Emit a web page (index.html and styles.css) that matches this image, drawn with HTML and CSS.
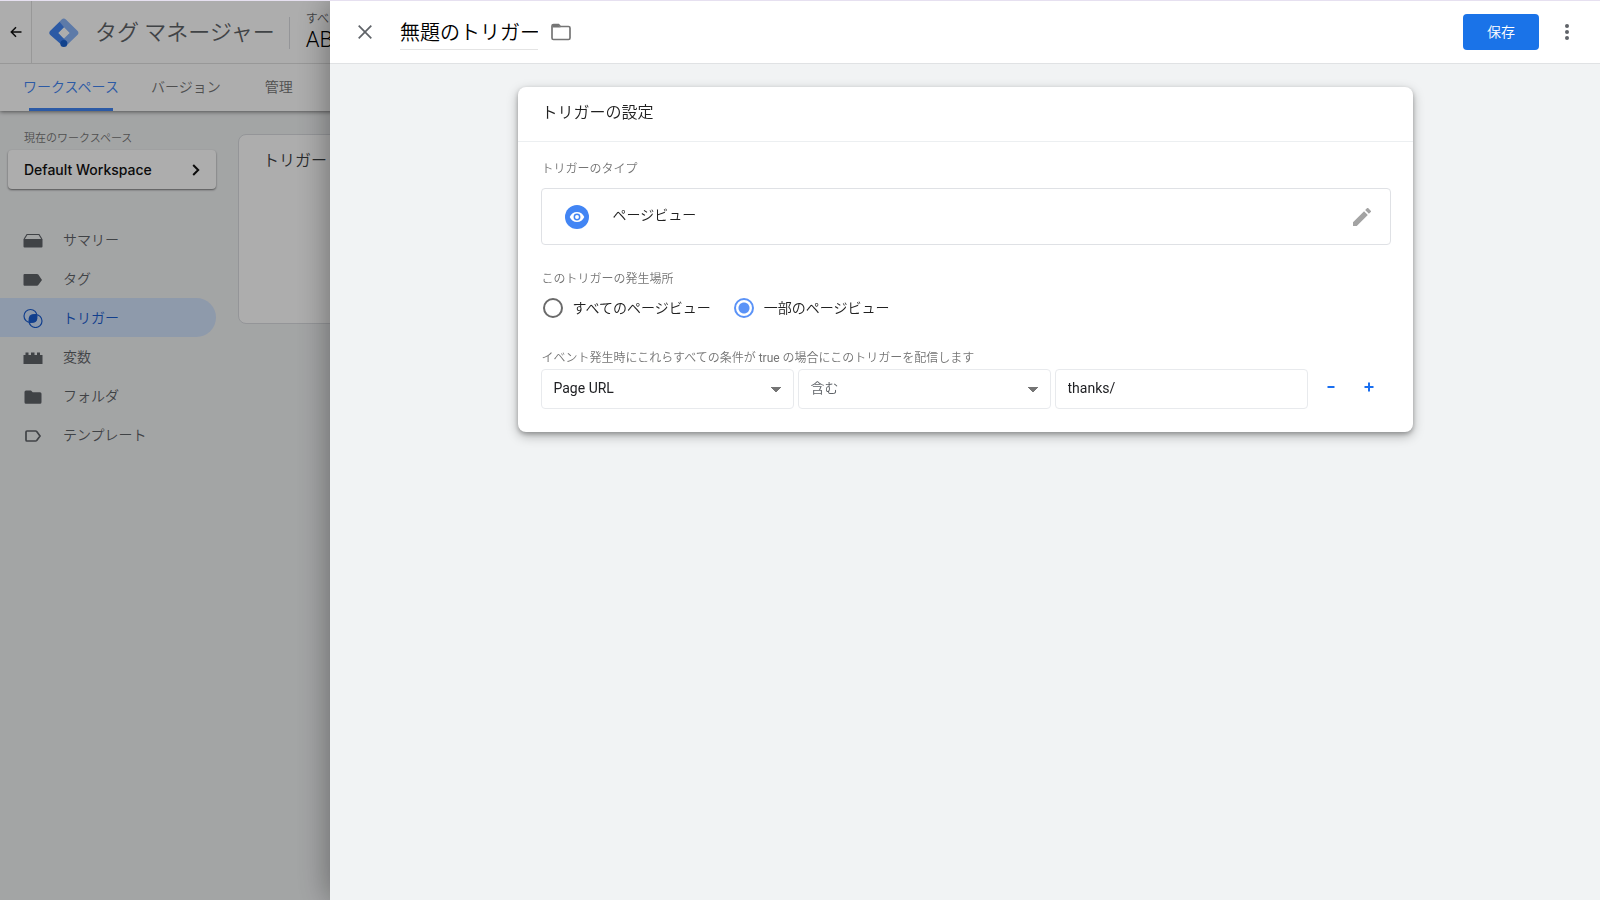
FILE: index.html
```html
<!DOCTYPE html>
<html lang="ja">
<head>
<meta charset="utf-8">
<title>タグ マネージャー</title>
<link rel="stylesheet" href="styles.css">
</head>
<body>
<div class="app">
  <header class="topbar">
    <button class="back" aria-label="戻る">
      <svg width="12" height="12" viewBox="0 0 12 12" fill="none" stroke="#111" stroke-width="1.5"><path d="M11.500 6H1.500M6 1.300L1.300 6L6 10.700"/></svg>
    </button>
    <div class="brand">
      <svg width="30" height="30" viewBox="0 0 30 30">
        <path d="M12.600 1.600a3 3 0 0 1 4.300 0L28.400 12.800a3 3 0 0 1 0 4.200L18 27L14 20L20.500 15L10 4.200z" fill="#8ab4f8"/>
        <path d="M1.300 12.800L10.500 3.700L15.200 9.300L9.500 15L18.500 24.500L14.500 28.500L1.300 17a3 3 0 0 1 0-4.200z" fill="#4285f4"/>
        <path d="M15 9.500L20.500 15L15 20.500L9.500 15z" fill="#fff"/>
        <circle cx="14.800" cy="25.400" r="3.500" fill="#1a62cf"/>
      </svg>
      <span class="brand-name">タグ マネージャー</span>
    </div>
    <div class="account">
      <span class="account-path">すべ</span>
      <span class="account-name">AB</span>
    </div>
  </header>
  <nav class="tabs">
    <a class="tab tab-active" href="#">ワークスペース</a>
    <a class="tab" href="#">バージョン</a>
    <a class="tab" href="#">管理</a>
  </nav>
  <div class="workspace">
    <aside class="sidebar">
      <p class="side-label">現在のワークスペース</p>
      <button class="workspace-picker">
        <span>Default Workspace</span>
        <svg width="8" height="12" viewBox="0 0 8 12" fill="none" stroke="#111" stroke-width="2"><path d="M1.200 1L6.200 6L1.200 11"/></svg>
      </button>
      <nav class="menu">
        <a class="item" href="#">
          <svg width="20" height="20" viewBox="0 0 20 20"><path d="M.500 9h19v7.500a1 1 0 0 1-1 1h-17a1 1 0 0 1-1-1z" fill="#5f6368"/><path d="M1.200 9L4 4.500h12L18.800 9" fill="none" stroke="#5f6368" stroke-width="1.200"/></svg>
          サマリー</a>
        <a class="item" href="#">
          <svg width="20" height="20" viewBox="0 0 20 20" fill="#5f6368"><path d="M1.500 5H14q.8 0 1.300.6L19 11l-3.700 5.100q-.5.700-1.300.7H1.500a1 1 0 0 1-1-1V6a1 1 0 0 1 1-1z"/></svg>
          タグ</a>
        <a class="item item-active" href="#">
          <svg width="20" height="20" viewBox="0 0 20 20"><g fill="none" stroke="#1a5dd0" stroke-width="1.200"><circle cx="7.500" cy="8" r="6.500"/><circle cx="12.500" cy="13" r="6.500"/></g><path d="M6.200 14.300A6.500 6.500 0 0 1 13.800 6.700A6.500 6.500 0 0 1 6.200 14.300z" fill="#1a5dd0"/><circle cx="10" cy="10.500" r="4.300" fill="#1a5dd0"/></svg>
          トリガー</a>
        <a class="item" href="#">
          <svg width="20" height="20" viewBox="0 0 20 20" fill="#5f6368"><path d="M.500 8h2V5.500h3V8h2.500V5.500h3.500V8H14V5.500h3V8h2.500v9H.500z"/></svg>
          変数</a>
        <a class="item" href="#">
          <svg width="20" height="20" viewBox="0 0 20 20" fill="#5f6368"><path d="M3 4.500h5l1.700 1.700H17a1.500 1.500 0 0 1 1.500 1.500v8.500a1.500 1.500 0 0 1-1.500 1.500H3a1.500 1.500 0 0 1-1.500-1.500V6A1.500 1.500 0 0 1 3 4.500z"/></svg>
          フォルダ</a>
        <a class="item" href="#">
          <svg width="20" height="20" viewBox="0 0 20 20" fill="none" stroke="#5f6368" stroke-width="1.700"><path d="M4 6h8.500q.8 0 1.200.5L17 11l-3.300 4.500q-.4.500-1.200.5H4a1 1 0 0 1-1-1V7a1 1 0 0 1 1-1z"/></svg>
          テンプレート</a>
      </nav>
    </aside>
    <main class="content">
      <section class="list-card"><h2 class="list-title">トリガー</h2></section>
    </main>
  </div>
</div>
<div class="scrim"></div>
<section class="sheet" role="dialog" aria-label="無題のトリガー">
  <header class="sheet-head">
    <button class="icon-button" aria-label="閉じる">
      <svg width="14" height="14" viewBox="0 0 14 14" fill="none" stroke="#5f6368" stroke-width="1.700"><path d="M.700.700L13.300 13.300M13.300.700L.700 13.300"/></svg>
    </button>
    <input class="sheet-title" aria-label="トリガー名" value="無題のトリガー">
    <button class="icon-button" aria-label="フォルダ">
      <svg width="20" height="18" viewBox="0 0 20 18"><path d="M2.500 1.500h5l2 2h8A1.500 1.500 0 0 1 19 5v10a1.500 1.500 0 0 1-1.500 1.500h-15A1.500 1.500 0 0 1 1 15V3a1.500 1.500 0 0 1 1.500-1.500z" fill="none" stroke="#757575" stroke-width="1.700"/><path d="M1.500 2h6l2 2.500h-8z" fill="#757575"/></svg>
    </button>
    <button class="save">保存</button>
    <button class="icon-button" aria-label="その他">
      <svg width="4" height="16" viewBox="0 0 4 16" fill="#5f6368"><circle cx="2" cy="2" r="2"/><circle cx="2" cy="8" r="2"/><circle cx="2" cy="14" r="2"/></svg>
    </button>
  </header>
  <div class="card">
    <h2 class="card-title">トリガーの設定</h2>
    <div class="card-body">
      <h3 class="label">トリガーのタイプ</h3>
      <button class="type">
        <svg width="24" height="24" viewBox="0 0 24 24"><circle cx="12" cy="12" r="12" fill="#4285f4"/><path d="M4.700 12C6 8.900 8.800 7 12 7s6 1.900 7.300 5c-1.300 3.100-4.100 5-7.300 5s-6-1.900-7.300-5z" fill="#fff"/><circle cx="12" cy="12" r="2.700" fill="#fff" stroke="#4285f4" stroke-width="1.500"/></svg>
        <span class="type-name">ページビュー</span>
        <svg width="18" height="18" viewBox="3 3 18 18" fill="#a3a3a3"><path d="M3 17.250V21h3.750L17.810 9.940l-3.750-3.750L3 17.250zM20.710 7.040a1 1 0 0 0 0-1.410l-2.340-2.340a1 1 0 0 0-1.410 0l-1.830 1.830 3.750 3.750 1.830-1.830z"/></svg>
      </button>
      <fieldset class="where">
        <legend class="label">このトリガーの発生場所</legend>
        <div class="radios">
          <label class="radio"><input type="radio" name="where">すべてのページビュー</label>
          <label class="radio"><input type="radio" name="where" checked>一部のページビュー</label>
        </div>
      </fieldset>
      <h3 class="label">イベント発生時にこれらすべての条件が <span class="latin">true</span> の場合にこのトリガーを配信します</h3>
      <div class="condition">
        <select class="field select" aria-label="変数"><option>Page URL</option></select>
        <select class="field select select-muted" aria-label="演算子"><option>含む</option></select>
        <input class="field" type="text" aria-label="値" value="thanks/">
        <div class="row-actions">
          <button class="row-button" aria-label="条件を削除"><svg width="10" height="10" viewBox="0 0 10 10"><path d="M1.500 4h7v2h-7z" fill="#1a6ff0"/></svg></button>
          <button class="row-button" aria-label="条件を追加"><svg width="10" height="10" viewBox="0 0 10 10"><path d="M.500 4H4V.500h2V4h3.500v2H6v3.500H4V6H.500z" fill="#1a6ff0"/></svg></button>
        </div>
      </div>
    </div>
  </div>
</section>
</body>
</html>
```
FILE: styles.css
```css
* { box-sizing: border-box; }
body {
  margin: 0;
  min-height: 100vh;
  overflow: hidden;
  background: #f1f3f4;
  color: #3c4043;
  font: 350 14px/20px Roboto, "Noto Sans CJK JP DemiLight", "Noto Sans CJK JP", sans-serif;
}
button, input, select { font: inherit; color: inherit; }
button { border: 0; padding: 0; background: none; cursor: pointer; }
a { color: inherit; text-decoration: none; }
h2, h3, p { margin: 0; font-weight: inherit; }
svg { display: block; flex: none; }

.app { border-top: 1px solid #e6e0f0; }
.topbar {
  position: relative;
  z-index: 1;
  display: flex;
  align-items: stretch;
  height: 63px;
  background: #fff;
  border-bottom: 1px solid #e0e0e0;
}
.back {
  display: flex;
  align-items: center;
  justify-content: center;
  width: 32px;
  border-right: 1px solid #e0e0e0;
}
.brand { display: flex; align-items: center; gap: 16px; padding: 1px 0 0 17px; }
.brand-name { color: #5f6368; font-size: 22px; line-height: 32px; white-space: nowrap; }
.account {
  display: flex;
  flex-direction: column;
  align-self: center;
  margin: 2px 0 0 14px;
  padding-left: 17px;
  background: linear-gradient(#dadce0, #dadce0) left center / 1px 32px no-repeat;
}
.account-path { color: #5f6368; font-size: 12px; line-height: 14px; }
.account-name { color: #000; font-size: 22px; line-height: 28px; }
.tabs {
  position: relative;
  display: flex;
  gap: 30px;
  height: 47px;
  padding: 0 22px;
  background: #fff;
  box-shadow: 0 1px 4px rgba(0, 0, 0, .5);
}
.tab { display: flex; align-items: center; color: #757575; padding: 0 1px 2px; }
.tab + .tab + .tab { margin-left: 12px; }
.tab-active {
  color: #4285f4;
  background: linear-gradient(#4285f4, #4285f4) center bottom / 84px 3px no-repeat;
}

.workspace { display: flex; }
.sidebar { width: 216px; padding-top: 19px; }
.side-label { padding-left: 24px; color: #757575; font-size: 11px; line-height: 18px; }
.workspace-picker {
  display: flex;
  align-items: center;
  justify-content: space-between;
  width: 208px;
  height: 39px;
  margin: 2px 0 31px 8px;
  padding: 0 16px;
  background: #fff;
  border-radius: 4px;
  box-shadow: 0 1px 2px rgba(0, 0, 0, .5);
  color: #111;
  font: 500 14px/20px Inter, sans-serif;
}
.item { display: flex; align-items: center; gap: 20px; height: 39px; padding-left: 23px; color: #5f6368; }
.item-active { color: #1a5dd0; background: #d2e3fc; border-radius: 0 20px 20px 0; }
.content { flex: 1; padding: 23px 22px 0; }
.list-card { height: 190px; padding: 14px 24px; background: #fff; border: 1px solid #dadce0; border-radius: 8px; }
.list-title { font-size: 16px; line-height: 24px; }

.scrim { position: fixed; inset: 1px 0 0; z-index: 2; background: rgba(0, 0, 0, .32); }
.sheet {
  position: fixed;
  inset: 1px 0 0 330px;
  z-index: 3;
  background: #f1f3f4;
  box-shadow: 0 0 32px rgba(0, 0, 0, .4);
  clip-path: inset(0 0 0 -60px);
}
.sheet-head {
  display: flex;
  align-items: center;
  height: 63px;
  padding: 0 21px 0 23px;
  background: #fff;
  border-bottom: 1px solid #e0e2e4;
}
.icon-button { display: flex; align-items: center; justify-content: center; width: 24px; height: 32px; }
.sheet-title {
  width: 138px;
  height: 35px;
  margin: 0 11px 0 23px;
  padding: 0;
  border: 0;
  border-bottom: 1px solid #e4e4e4;
  background: none;
  color: #000;
  font-size: 20px;
}
.save {
  width: 76px;
  height: 36px;
  margin: 0 16px 0 auto;
  background: #1a73e8;
  border-radius: 4px;
  color: #fff;
}
.card {
  max-width: 895px;
  margin: 23px auto 0;
  background: #fff;
  border-radius: 8px;
  box-shadow: 0 4px 12px rgba(0, 0, 0, .28), 0 2px 4px rgba(0, 0, 0, .24);
}
.card-title { padding: 14px 24px 16px; border-bottom: 1px solid #eceff1; color: #212121; font-size: 16px; line-height: 24px; }
.card-body { padding: 18px 22px 23px 23px; }
.label { padding: 0 1px; color: #757575; font-size: 12px; line-height: 18px; }
.latin { font-weight: 400; }
.type {
  display: flex;
  align-items: center;
  gap: 24px;
  width: 100%;
  height: 57px;
  margin: 10px 0 25px;
  padding: 0 19px 0 23px;
  border: 1px solid #dfe1e5;
  border-radius: 4px;
  text-align: left;
}
.type-name { flex: 1; padding-bottom: 4px; color: #212121; }
.where { margin: 0 0 31px; padding: 0; border: 0; }
.radios { display: flex; gap: 23px; padding: 10px 2px 0; }
.radio { display: flex; align-items: center; gap: 10px; color: #212121; }
.radio input {
  appearance: none;
  width: 20px;
  height: 20px;
  margin: 0;
  border: 2px solid #6a6a6a;
  border-radius: 50%;
}
.radio input:checked {
  border-color: #5b93f7;
  background: radial-gradient(circle, #5b93f7 5px, #fff 6px);
}
.condition { display: flex; gap: 4px; margin-top: 2px; }
.field {
  flex: 1;
  min-width: 0;
  height: 40px;
  padding: 0 12px 2px;
  border: 1px solid #e8eaed;
  border-radius: 4px;
  background-color: #fff;
  color: #202124;
  font-weight: 400;
}
.select {
  appearance: none;
  background-image: linear-gradient(to bottom right, #757575 50%, transparent 51%), linear-gradient(to bottom left, #757575 50%, transparent 51%);
  background-size: 5px 5px;
  background-position: right 12px center, right 17px center;
  background-repeat: no-repeat;
}
.select-muted { color: #5f6368; font-weight: 350; }
.row-actions { display: flex; width: 79px; padding-top: 8px; }
.row-button { display: flex; align-items: center; justify-content: center; width: 38px; height: 20px; }
```
